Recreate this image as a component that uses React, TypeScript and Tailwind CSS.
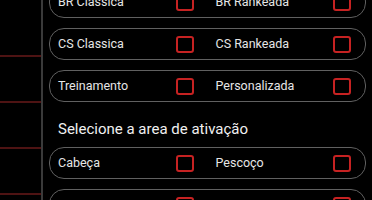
const rows: [string, string][] = [
  ['BR Classica', 'BR Rankeada'],
  ['CS Classica', 'CS Rankeada'],
  ['Treinamento', 'Personalizada'],
];

const areas: [string, string][] = [
  ['Cabeça', 'Pescoço'],
  ['Peito', 'Barriga'],
];

function Check() {
  return <span className="h-[17px] w-[18px] shrink-0 rounded-[3px] border-2 border-[#c62222]" />;
}

function OptionRow({ left, right }: { left: string; right: string }) {
  return (
    <div className="grid h-8 grid-cols-2 rounded-[15px] border-[1.5px] border-[#606060]">
      {[left, right].map((label) => (
        <div key={label} className="flex items-center justify-between pl-[8px] pr-[14px]">
          <span className="text-[12.5px] text-[#e6e6e6]">{label}</span>
          <Check />
        </div>
      ))}
    </div>
  );
}

export default function App() {
  return (
    <div
      className="flex h-[200px] w-[372px] overflow-hidden bg-black"
      style={{ fontFamily: 'Roboto, "Noto Sans", sans-serif' }}
    >
      <div className="flex w-[41px] shrink-0 flex-col pt-[11px]">
        {[0, 1, 2, 3].map((i) => (
          <div key={i} className="h-[46px] shrink-0 border-b-2 border-[#4e1313]" />
        ))}
      </div>
      <div className="w-[2px] shrink-0 bg-[#3a3a3a]" />
      <div className="mt-[-14px] flex flex-1 flex-col pl-[6px] pr-[6px]">
        <div className="flex flex-col gap-[10px]">
          {rows.map(([l, r]) => (
            <OptionRow key={l} left={l} right={r} />
          ))}
        </div>
        <h3 className="mb-[8px] mt-[17px] pl-[9px] text-[15px] leading-5 text-[#f0f0f0]">
          Selecione a area de ativação
        </h3>
        <div className="flex flex-col gap-[10px]">
          {areas.map(([l, r]) => (
            <OptionRow key={l} left={l} right={r} />
          ))}
        </div>
      </div>
    </div>
  );
}
